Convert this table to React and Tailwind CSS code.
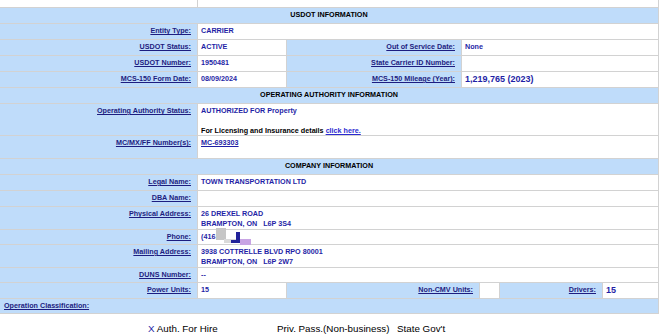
import React from 'react';

const blue = 'bg-[#bfdcfa]';

const Label = ({ w, h = 'h-[15px]', children, className = '' }) => (
  <div className={`${w} ${h} ${blue} shrink-0 pr-[6px] pt-[2px] text-right leading-[10px] ${className}`}>
    <a href="#" className="font-bold text-[#1d1d80] underline">{children}</a>
  </div>
);

const Value = ({ w, h = 'h-[15px]', children, className = '' }) => (
  <div className={`${w} ${h} shrink-0 bg-white pl-[3px] pt-[2px] font-bold leading-[10px] text-[#1f1fa6] ${className}`}>
    {children}
  </div>
);

const Header = ({ children }) => (
  <div className={`h-[15px] ${blue} pt-[2px] text-center font-bold leading-[10px] text-black`}>{children}</div>
);

const Row = ({ children }) => <div className="flex gap-px">{children}</div>;

const App = () => {
  return (
    <div className="h-[334px] w-[660px] overflow-hidden bg-white font-['Liberation_Sans',Arial,sans-serif] text-[7.2px]">
      <div className="flex w-[659px] flex-col gap-px bg-[#d2d2d2] pr-px pb-px">
        {/* top cut-off row */}
        <Row>
          <div className="h-[7px] w-[197px] bg-white" />
          <div className="h-[7px] w-[460px] bg-white" />
        </Row>

        <Header>USDOT INFORMATION</Header>

        <Row>
          <Label w="w-[197px]">Entity Type:</Label>
          <Value w="w-[460px]">CARRIER</Value>
        </Row>
        <Row>
          <Label w="w-[197px]">USDOT Status:</Label>
          <Value w="w-[88px]">ACTIVE</Value>
          <Label w="w-[174px]">Out of Service Date:</Label>
          <Value w="w-[196px]">None</Value>
        </Row>
        <Row>
          <Label w="w-[197px]">USDOT Number:</Label>
          <Value w="w-[88px]">1950481</Value>
          <Label w="w-[174px]">State Carrier ID Number:</Label>
          <Value w="w-[196px]"></Value>
        </Row>
        <Row>
          <Label w="w-[197px]">MCS-150 Form Date:</Label>
          <Value w="w-[88px]">08/09/2024</Value>
          <Label w="w-[174px]">MCS-150 Mileage (Year):</Label>
          <Value w="w-[196px]" className="text-[9px]">1,219,765 (2023)</Value>
        </Row>

        <Header>OPERATING AUTHORITY INFORMATION</Header>

        <Row>
          <Label w="w-[197px]" h="h-[31px]">Operating Authority Status:</Label>
          <Value w="w-[460px]" h="h-[31px]" className="leading-[9px]">
            AUTHORIZED FOR Property
            <br />
            <br />
            <span className="text-black">For Licensing and Insurance details </span>
            <a href="#" className="text-[#2b2bd0] underline">click here.</a>
          </Value>
        </Row>
        <Row>
          <Label w="w-[197px]" h="h-[22px]">MC/MX/FF Number(s):</Label>
          <Value w="w-[460px]" h="h-[22px]">
            <a href="#" className="underline">MC-693303</a>
          </Value>
        </Row>

        <Header>COMPANY INFORMATION</Header>

        <Row>
          <Label w="w-[197px]">Legal Name:</Label>
          <Value w="w-[460px]">TOWN TRANSPORTATION LTD</Value>
        </Row>
        <Row>
          <Label w="w-[197px]">DBA Name:</Label>
          <Value w="w-[460px]"></Value>
        </Row>
        <Row>
          <Label w="w-[197px]" h="h-[22px]">Physical Address:</Label>
          <Value w="w-[460px]" h="h-[22px]">
            26 DREXEL ROAD
            <br />
            BRAMPTON, ON &nbsp; L6P 3S4
          </Value>
        </Row>
        <Row>
          <Label w="w-[197px]" h="h-[14px]">Phone:</Label>
          <Value w="w-[460px]" h="h-[14px]" className="relative">
            (416
            <svg className="absolute left-[18px] top-[-2px] overflow-visible" width="40" height="18" viewBox="0 0 40 18">
              <rect x="0" y="0" width="10" height="12" fill="#c6c6c6" />
              <rect x="8" y="11" width="12" height="4" fill="#dadada" />
              <rect x="20" y="4" width="4" height="11" fill="#22229a" />
              <rect x="15" y="12" width="9" height="3" fill="#22229a" />
              <rect x="24" y="11" width="11" height="6" fill="#c8a4e4" />
            </svg>
          </Value>
        </Row>
        <Row>
          <Label w="w-[197px]" h="h-[22px]">Mailing Address:</Label>
          <Value w="w-[460px]" h="h-[22px]">
            3938 COTTRELLE BLVD RPO 80001
            <br />
            BRAMPTON, ON &nbsp; L6P 2W7
          </Value>
        </Row>
        <Row>
          <Label w="w-[197px]" h="h-[14px]">DUNS Number:</Label>
          <Value w="w-[460px]" h="h-[14px]">--</Value>
        </Row>
        <Row>
          <Label w="w-[197px]">Power Units:</Label>
          <Value w="w-[88px]">15</Value>
          <Label w="w-[192px]">Non-CMV Units:</Label>
          <Value w="w-[19px]"></Value>
          <Label w="w-[102px]" className="pr-[3px]">Drivers:</Label>
          <Value w="w-[55px]" className="text-[9px]">15</Value>
        </Row>
        <div className={`h-[14px] ${blue} pl-[4px] pt-[2px] leading-[10px]`}>
          <a href="#" className="font-bold text-[#1d1d80] underline">Operation Classification:</a>
        </div>
      </div>

      <div className="flex pl-[148px] pt-[9px] text-[9.8px] leading-[11px] text-black">
        <div className="w-[129px]">
          <span className="text-[#1f1fa6]">X</span> Auth. For Hire
        </div>
        <div className="w-[120px]">Priv. Pass.(Non-business)</div>
        <div>State Gov't</div>
      </div>
    </div>
  );
};

export default App;
